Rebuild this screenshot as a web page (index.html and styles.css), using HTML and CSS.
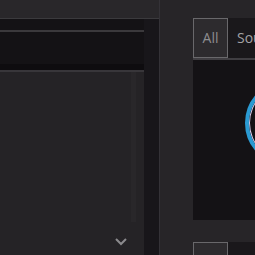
FILE: index.html
```html
<!DOCTYPE html>
<html>
<head>
<meta charset="utf-8">
<link rel="stylesheet" href="styles.css">
</head>
<body>
<div class="app">
  <div class="left">
    <div class="left-top"></div>
    <div class="left-body">
      <div class="main">
        <div class="head"><div class="head-line"></div></div>
        <div class="shade"></div>
        <div class="content">
          <div class="list">
            <svg class="chev" width="14" height="9" viewBox="0 0 14 9"><path d="M2 2 L7 7 L12 2" fill="none" stroke="#8b8a8d" stroke-width="2"/></svg>
          </div>
          <div class="scroll"><div class="thumb"></div></div>
        </div>
      </div>
      <div class="gutter"></div>
    </div>
  </div>
  <div class="right">
    <div class="tabs">
      <div class="tab active">All</div>
      <div class="tab">Sources</div>
    </div>
    <div class="preview">
      <div class="ring"></div>
    </div>
    <div class="tabs tabs2">
      <div class="tab active"></div>
      <div class="tab"></div>
    </div>
  </div>
</div>
</body>
</html>
```
FILE: styles.css
```css
html, body {
  margin: 0;
  padding: 0;
  background: #272528;
  width: 255px;
  height: 255px;
  overflow: hidden;
  font-family: "Open Sans", "Liberation Sans", sans-serif;
}
.app {
  display: flex;
  height: 255px;
}
.left {
  width: 159px;
  flex: none;
  display: flex;
  flex-direction: column;
  border-right: 1px solid #343237;
}
.left-top {
  height: 18px;
  background: #29272a;
  border-bottom: 1px solid #3b3a3d;
  flex: none;
}
.left-body {
  flex: 1;
  display: flex;
}
.main {
  width: 144px;
  flex: none;
  display: flex;
  flex-direction: column;
}
.head {
  height: 45px;
  background: #141215;
  padding-top: 11px;
  box-sizing: border-box;
  flex: none;
}
.head-line {
  height: 2px;
  background: #3b393c;
}
.shade {
  height: 6px;
  background: #0e0c0f;
  border-bottom: 2px solid #38363a;
  flex: none;
}
.content {
  flex: 1;
  display: flex;
  background: #252326;
}
.list {
  flex: 1;
  display: flex;
  align-items: flex-end;
  justify-content: flex-end;
  padding: 0 3px 9px 0;
}
.chev { display: block; }
.scroll {
  width: 13px;
  background: #252326;
}
.thumb {
  width: 5px;
  height: 150px;
  background: #29272a;
}
.gutter {
  width: 15px;
  background: #18161a;
}
.right {
  margin-left: 33px;
  margin-top: 18px;
  flex: 1;
  min-width: 0;
  display: flex;
  flex-direction: column;
  overflow: hidden;
}
.tabs {
  display: flex;
  flex: none;
  height: 40px;
  border-bottom: 2px solid #403e42;
  background: #1a181b;
  overflow: hidden;
}
.tab {
  box-sizing: border-box;
  flex: none;
  height: 40px;
  padding: 0 9px;
  color: #a3a2a5;
  font-size: 14px;
  line-height: 40px;
  white-space: nowrap;
}
.tab.active {
  width: 35px;
  padding: 0;
  text-align: center;
  background: #2d2b2e;
  border: 1px solid #69686b;
  line-height: 38px;
  color: #8e8d90;
}
.preview {
  flex: none;
  height: 160px;
  background: #141215;
  position: relative;
  overflow: hidden;
}
.ring {
  position: absolute;
  left: 52px;
  top: 20px;
  width: 78px;
  height: 78px;
  border-radius: 50%;
  border: 4px solid #2b9ad2;
  box-shadow: inset 0 0 0 1px #d8c8e8;
}
.tabs2 {
  margin-top: 22px;
  border-bottom: none;
}
```
